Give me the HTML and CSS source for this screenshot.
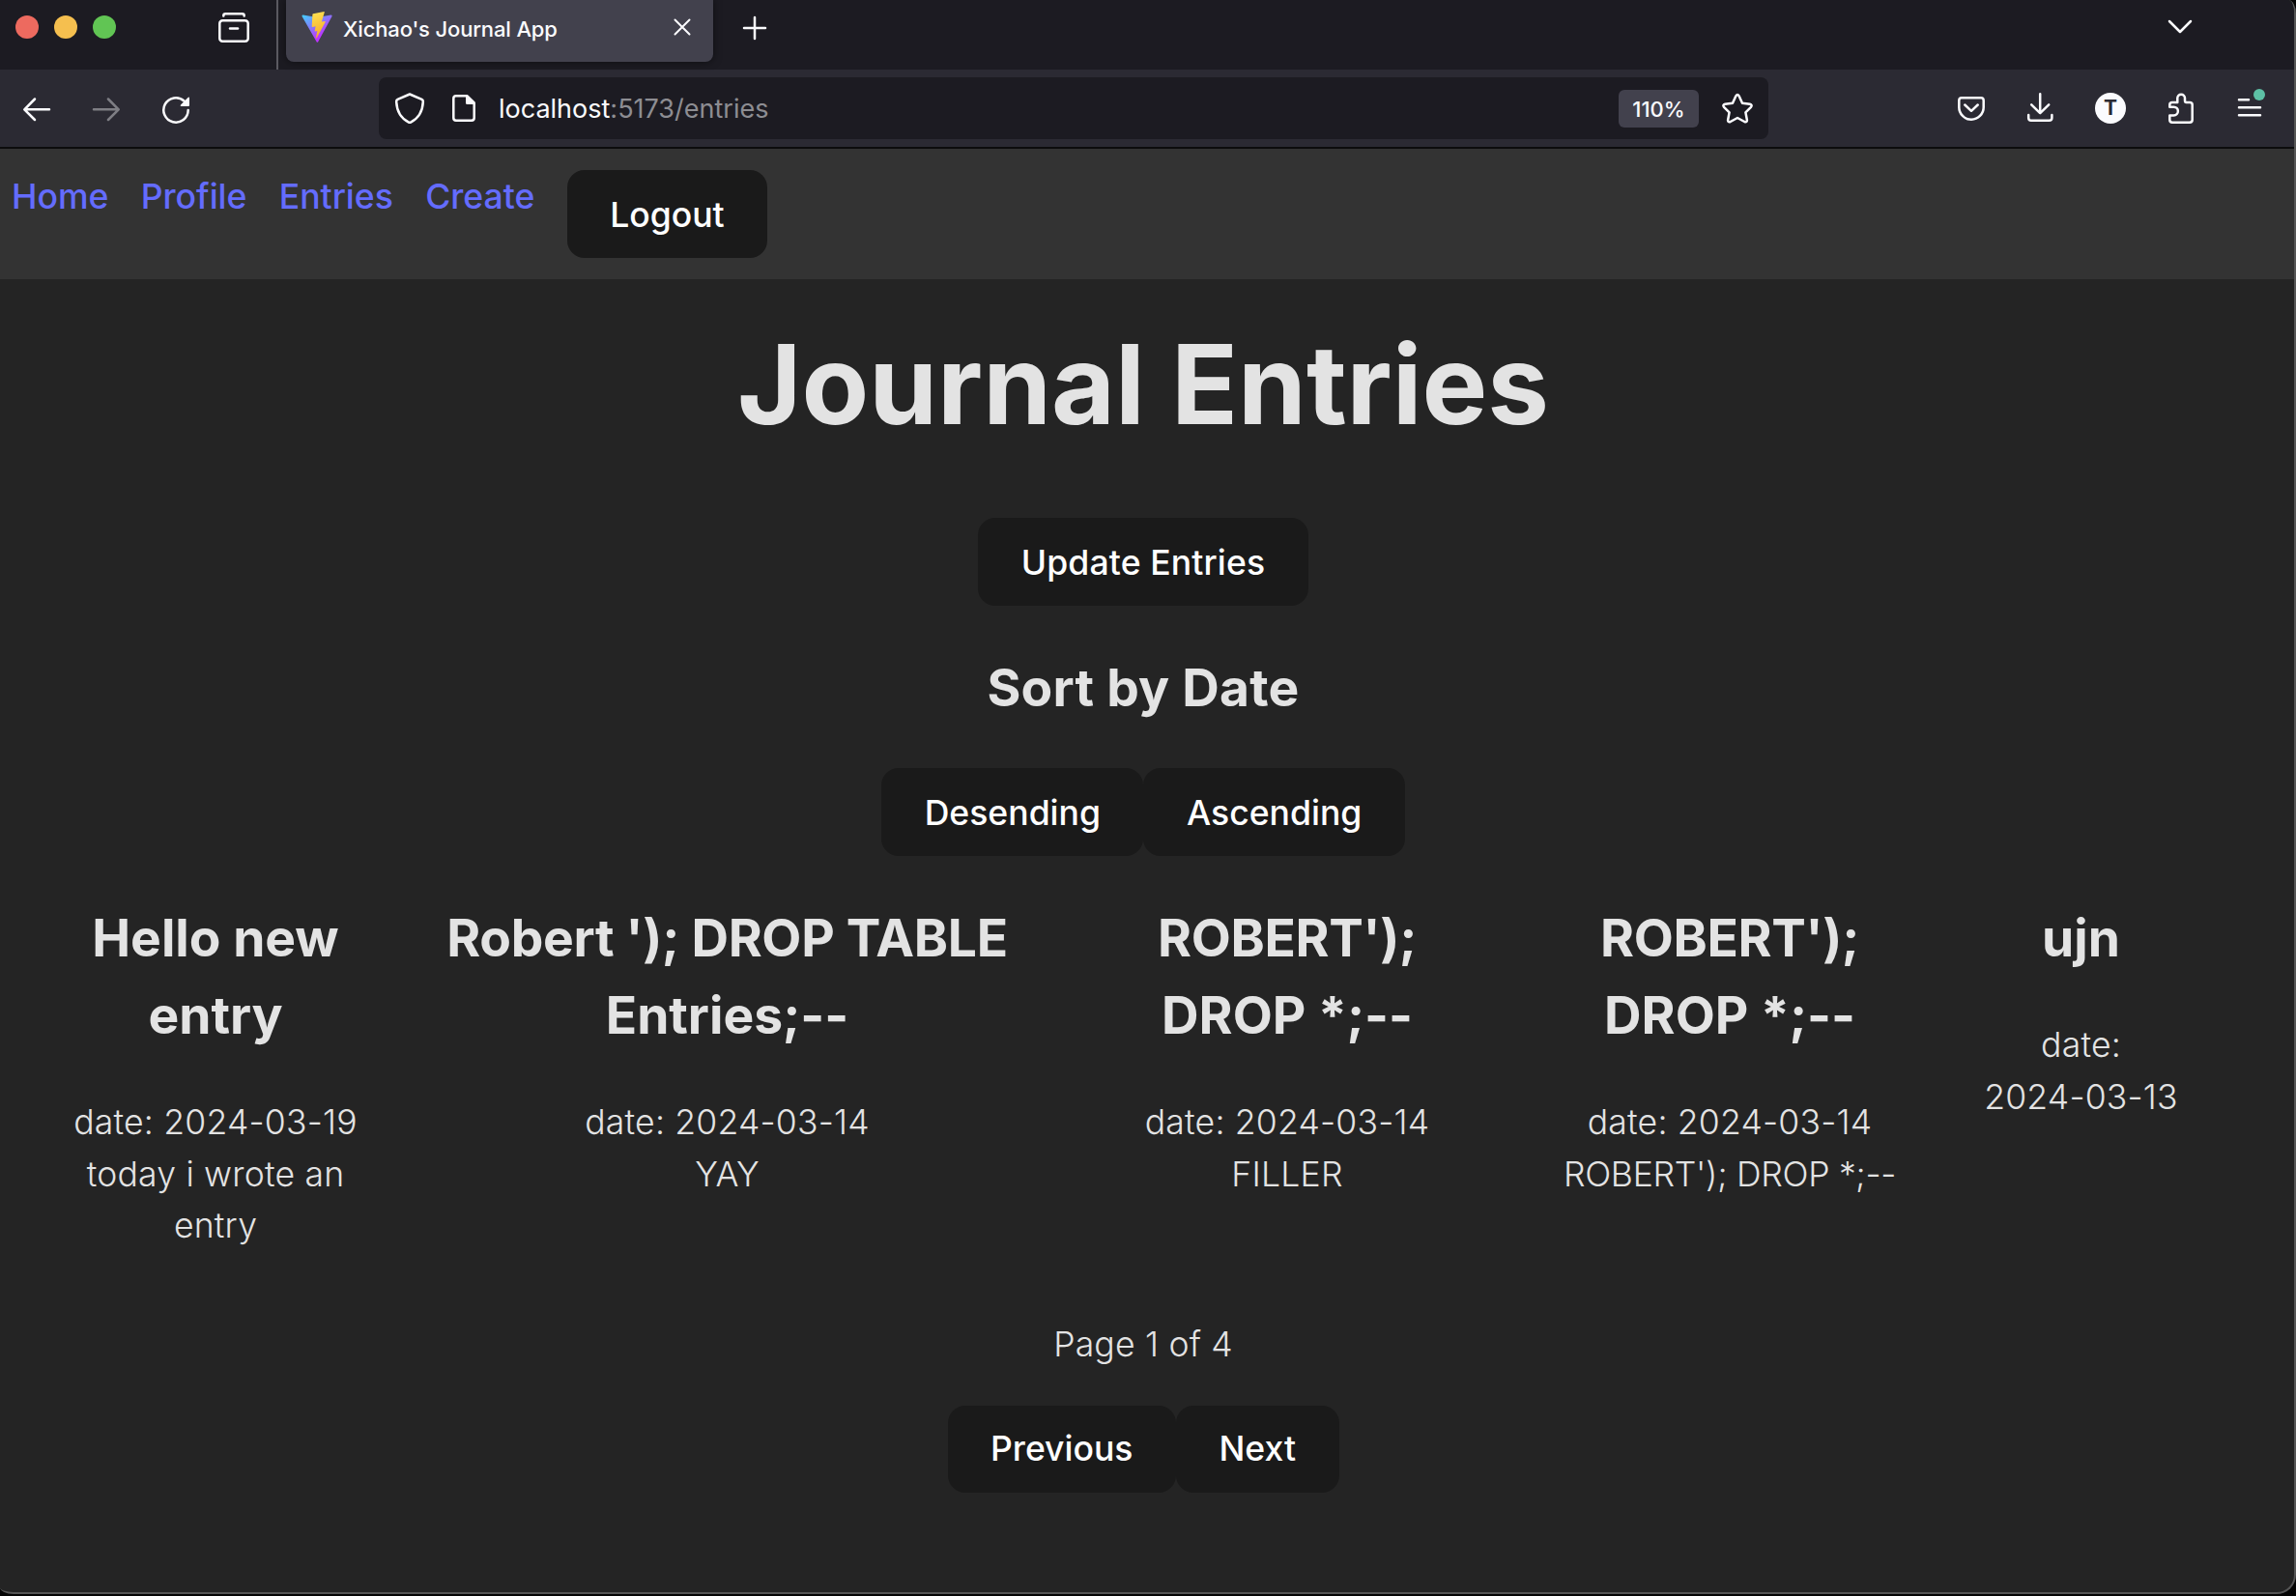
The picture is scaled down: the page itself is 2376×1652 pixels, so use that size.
FILE: index.html
```html
<!DOCTYPE html>
<html lang="en">
<head>
<meta charset="utf-8">
<title>Xichao's Journal App</title>
<link rel="stylesheet" href="styles.css">
</head>
<body>
<div class="window">
  <header class="tabbar">
    <div class="lights"><i class="light red"></i><i class="light yellow"></i><i class="light green"></i></div>
    <svg class="icon view" viewBox="0 0 32 32"><path d="M5.300 4.500V4.200Q5.300 2.300 7.300 2.300H24.700Q26.700 2.300 26.700 4.200V4.500"/><rect x="1.300" y="9.300" width="29.400" height="21.400" rx="3"/><path d="M12 17.500H20"/></svg>
    <div class="divider"></div>
    <div class="tab">
      <svg class="icon" viewBox="0 0 32 32">
        <defs>
          <linearGradient id="tri" x1="0" y1="0" x2="0.600" y2="0.800"><stop offset="0" stop-color="#41d1ff"/><stop offset="1" stop-color="#bd34fe"/></linearGradient>
          <linearGradient id="bolt" x1="0.400" y1="0" x2="0.600" y2="1"><stop offset="0" stop-color="#ffdf50"/><stop offset="1" stop-color="#f5a829"/></linearGradient>
        </defs>
        <path fill="url(#tri)" stroke="none" d="M31.500 4.900 17.200 31.200Q16.400 32.200 15.600 31.200L.6 4.900Q.2 3.500 1.600 3.500L16 6 30.500 3.500Q31.900 3.500 31.500 4.900Z"/>
        <path fill="url(#bolt)" stroke="none" d="M23.500.1 12 2.300Q11.500 2.400 11.400 3L10.700 15.300Q10.700 16 11.500 15.900L14.600 15.200 13.700 20Q13.700 20.600 14.300 20.500L16.300 19.900 15 26.900Q15.200 28 15.900 27.100L24.700 10.700Q24.900 9.900 24.200 9.900L20.800 10.600 23.700 1Q23.900.2 23.500.1Z"/>
      </svg>
      <span class="tab-title">Xichao's Journal App</span>
      <svg class="icon close" viewBox="0 0 32 32"><path d="M8.500 8.500 23.500 23.500M23.500 8.500 8.500 23.500"/></svg>
    </div>
    <svg class="icon plus" viewBox="0 0 32 32"><path d="M16 5V27M5 16H27"/></svg>
    <svg class="icon chevron" viewBox="0 0 32 32"><path d="M5 10 16 21 27 10"/></svg>
  </header>

  <div class="toolbar">
    <div class="tools">
      <svg class="icon" viewBox="0 0 32 32"><path d="M29 17.300H3.500M14 6.500 3.300 17.300 14 28"/></svg>
      <svg class="icon disabled" viewBox="0 0 32 32"><path d="M3 17.300H28.500M18 6.500 28.700 17.300 18 28"/></svg>
      <svg class="icon" viewBox="0 0 32 32"><path d="M28.700 18A12.700 12.700 0 1 1 24.500 8.500"/><path class="solid" d="M30 5.300V13Q30 14 29 14H21.500Q20 13.700 21 12.500L28.500 5Q29.800 4 30 5.300Z"/></svg>
    </div>
    <div class="urlbar">
      <svg class="icon" viewBox="0 0 32 32"><path d="M16 1.500 28.500 6.800Q30 7.500 29.800 9.500C29.300 20 25 26.500 17 30.600Q16 31 15 30.600C7 26.500 2.700 20 2.200 9.500Q2 7.500 3.500 6.800Z"/></svg>
      <svg class="icon" viewBox="0 0 32 32"><path d="M19.500 3.300H8Q5.300 3.300 5.300 6V26Q5.300 28.700 8 28.700H24Q26.700 28.700 26.700 26V10.500Z"/><path class="solid" d="M18 3 27.500 12H19.500Q18 12 18 10.500Z"/></svg>
      <span class="url">localhost<span class="path">:5173/entries</span></span>
      <span class="zoom">110%</span>
      <svg class="icon" viewBox="0 0 32 32"><path d="M14.400 3.300Q16 .800 17.600 3.300L21 10.800 28.800 11.800Q31.700 12.500 30 14.800L24.400 20.300 25.900 28.300Q26 31 23.300 30L16 26 8.700 30Q6 31 6.100 28.300L7.600 20.300 2 14.800Q.3 12.500 3.200 11.800L11 10.800Z"/></svg>
    </div>
    <div class="tools">
      <svg class="icon" viewBox="0 0 32 32"><path d="M6 5.300H26Q28.700 5.300 28.700 8V15A12.700 12.700 0 0 1 3.300 15V8Q3.300 5.300 6 5.300ZM9.300 12.500 16 18.800 22.700 12.500"/></svg>
      <svg class="icon" viewBox="0 0 32 32"><path d="M15.200 1.300V21M6.200 12.300 15.200 21.200 24.200 12.300M3.200 23V26Q3.200 28.800 6 28.800H24.500Q27.400 28.800 27.400 26V23"/></svg>
      <span class="avatar">T</span>
      <svg class="icon" viewBox="0 0 32 32"><path d="M13.300 10V5.500A3.800 3.800 0 0 1 21 5.500V8Q21 10 22.500 10H26Q28.700 10 28.700 12.500V28Q28.700 30.700 26 30.700H8Q5.300 30.700 5.300 28V23.500H9.500A4.400 4.400 0 0 0 9.500 14.700H5.300V12.500Q5.300 10 8 10Z"/></svg>
      <span class="menu"><svg class="icon" viewBox="0 0 32 32"><path d="M5 7.200H15M5 15.200H27M5 23.200H27"/></svg><i class="badge"></i></span>
    </div>
  </div>

  <nav class="nav">
    <a>Home</a><a>Profile</a><a>Entries</a><a>Create</a><button>Logout</button>
  </nav>

  <main class="page">
    <h1>Journal Entries</h1>
    <button class="update">Update Entries</button>
    <h2 class="sort">Sort by Date</h2>
    <div class="buttons"><button>Desending</button><button>Ascending</button></div>
    <section class="entries">
      <article><h2>Hello new<br>entry</h2><p>date: 2024-03-19</p><p>today i wrote an<br>entry</p></article>
      <article><h2><span class="caps">Robert '); DROP TABLE</span><br>Entries;--</h2><p>date: 2024-03-14</p><p>YAY</p></article>
      <article><h2><span class="caps">ROBERT');</span><br>DROP *;--</h2><p>date: 2024-03-14</p><p>FILLER</p></article>
      <article><h2><span class="caps">ROBERT');</span><br>DROP *;--</h2><p>date: 2024-03-14</p><p class="caps">ROBERT'); DROP *;--</p></article>
      <article><h2>ujn</h2><p>date:<br>2024-03-13</p></article>
    </section>
    <p class="count">Page 1 of 4</p>
    <div class="buttons pager"><button>Previous</button><button>Next</button></div>
  </main>
</div>
</body>
</html>
```

FILE: styles.css
```css
* { box-sizing: border-box; }

body {
  margin: 0;
  background: #050505;
  font-family: Inter, "Liberation Sans", sans-serif;
  font-size: 35.56px;
  line-height: 1.5;
  color: #e3e3e3;
  height: 1652px;
  overflow: hidden;
}

.window {
  width: 2376px;
  height: 1650px;
  background: #242424;
  border-right: 2px solid #565656;
  border-bottom: 2px solid #565656;
  border-radius: 0 8px 20px 14px / 0 14px 20px 7px;
  overflow: hidden;
}

.icon {
  display: block;
  flex: none;
  width: 32px;
  height: 32px;
  fill: none;
  stroke: #fbfbfe;
  stroke-width: 2.5;
  stroke-linecap: round;
  stroke-linejoin: round;
}
.icon .solid { fill: #fbfbfe; stroke: none; }
.disabled { opacity: .4; }

.tabbar {
  display: flex;
  height: 72px;
  background: #1c1b22;
}
.lights { display: flex; gap: 16px; padding: 16px 0 0 16px; }
.light { width: 24px; height: 24px; border-radius: 50%; }
.red { background: #ed6a5f; }
.yellow { background: #f5bf4f; }
.green { background: #61c554; }
.view { margin: 12px 0 0 106px; }
.divider { width: 2px; margin-left: 28px; background: #5b5a61; }
.tab {
  display: flex;
  width: 442px;
  height: 64px;
  margin-left: 8px;
  padding: 12px 16px;
  background: #42414d;
  border-radius: 0 0 8px 8px;
  box-shadow: 0 0 8px rgba(0, 0, 0, .5);
}
.tab-title {
  margin-left: 11px;
  font-size: 22px;
  font-weight: 500;
  line-height: 36px;
  letter-spacing: -.15px;
  color: #fbfbfe;
}
.close { margin-left: auto; stroke-width: 2; }
.plus { margin: 13px 0 0 27px; }
.chevron { margin: 12px 102px 0 auto; }

.toolbar {
  display: flex;
  align-items: center;
  justify-content: space-between;
  height: 82px;
  padding: 0 30px 0 22px;
  background: #2b2a33;
  border-bottom: 2px solid #0c0c0d;
}
.tools { display: flex; gap: 40px; }
.urlbar {
  display: flex;
  align-items: center;
  width: 1438px;
  height: 64px;
  padding: 0 16px;
  gap: 24px;
  background: #1c1b22;
  border-radius: 8px;
}
.url {
  flex: 1;
  margin-left: -4px;
  padding-top: 2px;
  font-size: 27px;
  line-height: 32px;
  color: #fbfbfe;
}
.path { color: #8d8d92; }
.zoom {
  width: 83px;
  height: 39px;
  border-radius: 6px;
  background: #42414d;
  color: #fbfbfe;
  font-size: 22px;
  font-weight: 500;
  line-height: 40px;
  text-align: center;
}
.avatar {
  width: 32px;
  height: 32px;
  border-radius: 50%;
  background: #fbfbfe;
  color: #2b2a33;
  font-size: 21px;
  font-weight: 700;
  line-height: 31px;
  text-align: center;
}
.menu { position: relative; }
.badge {
  position: absolute;
  top: -4px;
  right: 0;
  width: 12px;
  height: 12px;
  border-radius: 50%;
  background: #5dc0a5;
}

.nav {
  display: flex;
  align-items: flex-start;
  gap: 33.3px;
  height: 135px;
  padding: 22px 12px;
  background: #333;
}
.nav a { padding-top: 1px; color: #646cff; font-weight: 500; }

button {
  height: 91px;
  padding: 2px 44.5px 0;
  border: 0;
  border-radius: 18px;
  background: #1a1a1a;
  color: #fff;
  font: 500 35.56px Inter, "Liberation Sans", sans-serif;
}
.update { padding: 2px 45px 0; letter-spacing: .12px; }

.page {
  display: flex;
  flex-direction: column;
  align-items: center;
  width: 2366px;
}
h1 {
  margin: 46px 0 76px;
  font-size: 113.8px;
  font-weight: 700;
  line-height: 1.1;
}
h2 {
  margin: 45px 0 44px;
  font-size: 53.33px;
  font-weight: 700;
  line-height: 80px;
}
.sort { margin-bottom: 43px; letter-spacing: .25px; }
p { margin: 0; font-weight: 350; letter-spacing: .2px; }
.buttons { display: flex; }
.entries {
  display: grid;
  grid-template-columns: 444px 615px 544px 372px 355px;
  width: 2366px;
  height: 479px;
  padding-left: 1px;
  text-align: center;
  white-space: nowrap;
}
.caps { letter-spacing: -.3px; }
.count { margin-bottom: 36px; }
.pager button { height: 90px; padding-top: 0; }
```
